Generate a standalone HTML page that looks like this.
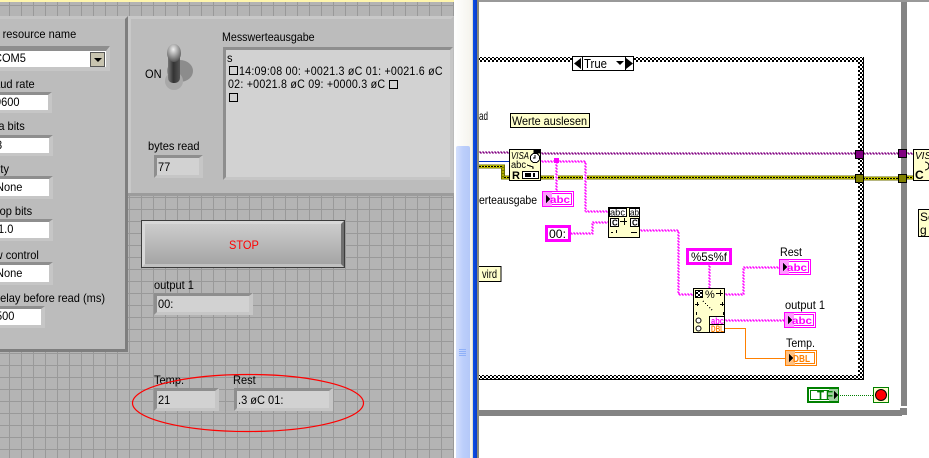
<!DOCTYPE html>
<html><head><meta charset="utf-8"><style>
html,body{margin:0;padding:0;width:929px;height:458px;overflow:hidden;background:#fff}
body{position:relative;font-family:"Liberation Sans",sans-serif;font-size:12px;color:#000}
.a{position:absolute}
.t{position:absolute;white-space:nowrap;line-height:14px;transform:scaleX(.92);transform-origin:0 0}
#fp{position:absolute;left:0;top:0;width:454px;height:458px;overflow:hidden;background-color:#b4b4b4;
background-image:linear-gradient(90deg,#999 1px,transparent 1px),linear-gradient(#999 1px,transparent 1px);
background-size:12px 12px;background-position:9px 5px}
.f{position:absolute;box-sizing:border-box;border-style:solid;border-width:3px 4px 3px 3px;border-color:#8e8e8e #c6c6c6 #c6c6c6 #8e8e8e;white-space:nowrap;line-height:14px;overflow:hidden;padding-left:1px}
.f span{display:inline-block;transform:scaleX(.92);transform-origin:0 0}
.w{background:#fff}.g{background:#d2d2d2}
.sq{position:absolute;width:7px;height:7px;border:1px solid #000}
</style></head><body>
<div id="fp">
<div class="a" style="left:0;top:0;width:454px;height:2px;background:#fff6ac"></div>
<!-- left panel -->
<div class="a" style="left:-4px;top:16px;width:132px;height:336px;box-sizing:border-box;background:#bcbcbc;border:3px solid;border-color:#c4c4c4 #7e7e7e #7e7e7e #c4c4c4"></div>
<div class="t" style="left:-25px;top:27px">VISA resource name</div>
<div class="f w" style="left:-4px;top:46px;width:114px;height:25px;border-width:5px 4px 4px 3px"><span style="margin-left:-6px">COM5</span></div>
<div class="a" style="left:90px;top:52px;width:15px;height:15px;background:#c8c4b0;border:1px solid #555;box-sizing:border-box"></div>
<div class="a" style="left:94px;top:58px;width:0;height:0;border:4px solid transparent;border-top:4px solid #000;border-bottom:0"></div>
<div class="t" style="left:-12px;top:77px">baud rate</div>
<div class="f w" style="left:-4px;top:92px;width:56px;height:21px"><span style="margin-left:-5px">9600</span></div>
<div class="t" style="left:-17px;top:119px">data bits</div>
<div class="f w" style="left:-4px;top:135px;width:57px;height:21px"><span style="margin-left:-4px">8</span></div>
<div class="t" style="left:-18px;top:162px">parity</div>
<div class="f w" style="left:-4px;top:176px;width:57px;height:23px;padding-top:1px"><span style="margin-left:-4px">None</span></div>
<div class="t" style="left:-9px;top:204px">stop bits</div>
<div class="f w" style="left:-4px;top:219px;width:57px;height:22px"><span style="margin-left:-2px">1.0</span></div>
<div class="t" style="left:-17px;top:248px">flow control</div>
<div class="f w" style="left:-4px;top:262px;width:57px;height:23px;padding-top:1px"><span style="margin-left:-4px">None</span></div>
<div class="t" style="left:-6px;top:291px">delay before read (ms)</div>
<div class="f w" style="left:-4px;top:306px;width:49px;height:22px"><span style="margin-left:-4px">500</span></div>
<!-- right panel -->
<div class="a" style="left:128px;top:16px;width:326px;height:180px;box-sizing:border-box;background:#bcbcbc;border:3px solid;border-color:#c8c8c8 #bcbcbc #808080 #c8c8c8"></div>
<div class="a" style="left:128px;top:193px;width:326px;height:3px;background:#9c9c9c"></div>
<div class="t" style="left:145px;top:67px">ON</div>
<svg class="a" style="left:160px;top:40px" width="40" height="54">
<defs><linearGradient id="tg" x1="0" x2="1" y1="0" y2="0"><stop offset="0" stop-color="#777"/><stop offset=".45" stop-color="#333"/><stop offset="1" stop-color="#555"/></linearGradient>
<radialGradient id="tk" cx=".45" cy=".3" r=".7"><stop offset="0" stop-color="#eee"/><stop offset="1" stop-color="#555"/></radialGradient></defs>
<ellipse cx="20" cy="31" rx="13" ry="11" fill="#8c8c8c"/>
<ellipse cx="14" cy="41" rx="9" ry="9" fill="#a8a8a8"/>
<rect x="8" y="8" width="12" height="35" rx="5" fill="url(#tg)"/>
<ellipse cx="14" cy="13" rx="7" ry="9" fill="url(#tk)"/>
</svg>
<div class="t" style="left:222px;top:30px;transform:scaleX(.89)">Messwerteausgabe</div>
<div class="t" style="left:148px;top:139px">bytes read</div>
<div class="f g" style="left:154px;top:155px;width:49px;height:23px;padding-top:2px;padding-left:1px"><span>77</span></div>
<div class="a" style="left:223px;top:47px;width:230px;height:133px;box-sizing:border-box;background:#d2d2d2;border:3px solid;border-color:#8e8e8e #c6c6c6 #c6c6c6 #8e8e8e"></div>
<div class="t" style="left:227px;top:51px">s</div>
<div class="sq" style="left:229px;top:66px"></div>
<div class="t" style="left:239px;top:64px;letter-spacing:.25px;transform:scaleX(.89)">14:09:08 00: +0021.3 øC 01: +0021.6 øC</div>
<div class="t" style="left:228px;top:77px;letter-spacing:.25px;transform:scaleX(.89)">02: +0021.8 øC 09: +0000.3 øC</div>
<div class="sq" style="left:389px;top:80px"></div>
<div class="sq" style="left:229px;top:93px"></div>
<!-- STOP -->
<div class="a" style="left:141px;top:220px;width:204px;height:48px;box-sizing:border-box;border:1px solid #3c3c3c;background:linear-gradient(#cfcfcf,#a2a2a2)"></div>
<div class="a" style="left:142px;top:221px;width:202px;height:46px;box-sizing:border-box;border:3px solid;border-color:#d8d8d8 #6e6e6e #c0c0c0 #d8d8d8"></div>
<div class="t" style="left:229px;top:238px;color:#f00">STOP</div>
<div class="t" style="left:154px;top:278px">output 1</div>
<div class="f g" style="left:154px;top:293px;width:99px;height:22px;padding-top:1px;padding-left:1px"><span>00:</span></div>
<div class="t" style="left:154px;top:373px">Temp.</div>
<div class="f g" style="left:154px;top:388px;width:65px;height:23px;padding-top:2px;padding-left:1px"><span>21</span></div>
<div class="t" style="left:233px;top:373px">Rest</div>
<div class="f g" style="left:234px;top:388px;width:99px;height:23px;padding-top:2px;padding-left:1px"><span>.3 øC 01:</span></div>
<svg class="a" style="left:0;top:0" width="454" height="458"><ellipse cx="248" cy="403" rx="115.5" ry="28.5" fill="none" stroke="#f00" stroke-width="1.2"/></svg>
</div>
<!-- scrollbar -->
<div class="a" style="left:454px;top:0;width:18px;height:458px;background:linear-gradient(90deg,#fff,#f4f3ec)"></div>
<div class="a" style="left:456px;top:146px;width:14px;height:312px;background:linear-gradient(90deg,#d4e0fd,#bccefb 50%,#b4c8f8);border-radius:2px 2px 0 0"></div>
<div class="a" style="left:459px;top:349px;width:7px;height:8px;background:repeating-linear-gradient(#8fb0f8 0 1px,transparent 1px 2px)"></div>
<div class="a" style="left:472px;top:0;width:1px;height:458px;background:#dcdcd0"></div>
<div class="a" style="left:473px;top:0;width:4px;height:458px;background:linear-gradient(90deg,#0a50e8,#0a3cc8)"></div>
<div class="a" style="left:477px;top:0;width:2px;height:458px;background:#8a8a78"></div>
<!-- diagram -->
<svg class="a" style="left:479px;top:0" width="450" height="458" viewBox="479 0 450 458" font-family="Liberation Sans, sans-serif" font-size="12" shape-rendering="crispEdges">
<defs>
<pattern id="chk" width="4" height="4" patternUnits="userSpaceOnUse"><rect width="4" height="4" fill="#fff"/><rect width="2" height="2" fill="#000"/><rect x="2" y="2" width="2" height="2" fill="#000"/></pattern>
</defs>
<rect x="479" y="0" width="450" height="2" fill="#999"/>
<!-- while loop -->
<rect x="901" y="2" width="6" height="404" fill="#848484"/>
<rect x="479" y="410" width="423" height="6" fill="#848484"/>
<rect x="900" y="408" width="7" height="7" fill="#848484"/>
<!-- case -->
<rect x="479" y="57" width="385" height="5" fill="url(#chk)"/>
<rect x="479" y="375" width="385" height="5" fill="url(#chk)"/>
<rect x="858" y="57" width="5" height="323" fill="url(#chk)"/>
<rect x="863" y="57" width="1" height="323" fill="#000"/>
<rect x="479" y="379" width="385" height="1" fill="#000"/>
<rect x="572.500" y="56.500" width="61" height="14" fill="#fff" stroke="#000"/>
<path d="M582.500 56V71M625.500 56V71" stroke="#000" fill="none"/>
<path d="M574 63.500L581 58V69ZM633 63.500L626 58V69Z" fill="#000" shape-rendering="auto"/>
<path d="M616 61H624L620 65Z" fill="#000" shape-rendering="auto"/>
<text x="584" y="68" font-size="12.5" textLength="23" lengthAdjust="spacingAndGlyphs">True</text>
<!-- labels -->
<text x="479" y="120" textLength="9" lengthAdjust="spacingAndGlyphs">ad</text>
<rect x="510.500" y="113.500" width="79" height="14" fill="#ffc" stroke="#000"/>
<text x="512" y="125" textLength="75" lengthAdjust="spacingAndGlyphs">Werte auslesen</text>
<text x="479" y="204" textLength="58" lengthAdjust="spacingAndGlyphs">erteausgabe</text>
<rect x="479" y="266" width="22" height="16" fill="#ffc"/>
<path d="M479 266.500H501V281.500H479" fill="none" stroke="#000"/>
<text x="482" y="278" textLength="15" lengthAdjust="spacingAndGlyphs">vird</text>
<!-- wires purple -->
<g fill="none" stroke="#800080">
<path d="M479 152H509M541 153H855M863 153H898M907 153H913" stroke-dasharray="2 1"/>
<path d="M479 153H509M541 154H855M863 154H898M907 154H913" stroke-dasharray="2 1" stroke-dashoffset="2"/>
</g>
<path d="M479 161.500H509" stroke="#0030c0" fill="none"/>
<!-- yellow -->
<g fill="none">
<path d="M479 166.500H503V177.500H509M541 177.500H554M558 177.500H583M587 177.500H855M863 178.500H898M907 177.500H913" stroke="#6c6c00" stroke-width="4"/>
<path d="M479 166.500H503V177.500H509M541 177.500H554M558 177.500H583M587 177.500H855M863 178.500H898M907 177.500H913" stroke="#e8e800" stroke-width="2"/>
<path d="M479 166.500H503V177.500H509M541 177.500H554M558 177.500H583M587 177.500H855M863 178.500H898M907 177.500H913" stroke="#000" stroke-width="1" stroke-dasharray="2 1"/>
</g>
<!-- pink wires -->
<g fill="none" stroke="#f0f">
<path d="M541 161H585V211H608M556 161V191M570 233H592V222H608M640 230H678V294H693M709 265V288M725 294H743V267H779M725 320H784" stroke-dasharray="2 1"/>
<path transform="translate(1 1)" d="M540 161H585V211H607M556 160V190M569 233H592V222H607M639 230H678V294H692M709 264V287M724 294H743V267H778M724 320H783" stroke-dasharray="2 1" stroke-dashoffset="2"/>
</g>
<rect x="554" y="158" width="5" height="5" fill="#f0f"/>
<!-- orange -->
<path d="M725 328.500H745.500V358.500H785" fill="none" stroke="#ff8000"/>
<!-- terminals -->
<g stroke="#000">
<rect x="855.500" y="150.500" width="8" height="8" fill="#800080"/>
<rect x="855.500" y="174.500" width="8" height="8" fill="#808000"/>
<rect x="898.500" y="149.500" width="8" height="8" fill="#800080"/>
<rect x="898.500" y="174.500" width="8" height="8" fill="#808000"/>
</g>
<!-- VISA node -->
<rect x="509.500" y="149.500" width="31" height="31" fill="#ffc" stroke="#000"/>
<text x="511" y="159" font-size="10" font-style="italic" textLength="18" lengthAdjust="spacingAndGlyphs">VISA</text>
<rect x="533.500" y="149.500" width="7" height="4" fill="#000"/>
<rect x="530.500" y="153.500" width="9" height="9" rx="4" fill="#fff" stroke="#000"/>
<path d="M535 155V158H533M527 165L533 167V169" stroke="#000" fill="none"/>
<text x="511" y="168" font-size="10" textLength="15" lengthAdjust="spacingAndGlyphs">abc</text>
<text x="512" y="179" font-size="11" font-weight="bold">R</text>
<rect x="522.500" y="171.500" width="16" height="7" fill="#fff" stroke="#000"/>
<rect x="525" y="173" width="6" height="4" fill="#000"/><rect x="533" y="173" width="2" height="4" fill="#000"/>
<!-- Replace node -->
<rect x="608.500" y="207.500" width="31" height="30" fill="#ffc" stroke="#000"/>
<rect x="609.500" y="208.500" width="17" height="8" fill="#fff" stroke="#000"/>
<rect x="629.500" y="208.500" width="10" height="8" fill="#fff" stroke="#000"/>
<text x="610" y="215.500" font-size="9.500" textLength="15" lengthAdjust="spacingAndGlyphs">abc</text><text x="630" y="215.500" font-size="9.500" textLength="9" lengthAdjust="spacingAndGlyphs">ab</text>
<rect x="610.500" y="218.500" width="8" height="8" fill="#fff" stroke="#000"/>
<rect x="630.500" y="218.500" width="8" height="8" fill="#fff" stroke="#000"/>
<text x="612" y="225.500" font-size="8" font-weight="bold">C</text><text x="632" y="225.500" font-size="8" font-weight="bold">C</text>
<path d="M620 221.500H627M624.500 218V225" stroke="#000" fill="none"/>
<path d="M611 232.500H613M616.500 230V233M631 232.500H637" stroke="#000" fill="none"/>
<!-- Scan node -->
<rect x="693.500" y="288.500" width="31" height="44" fill="#ffc" stroke="#000"/>
<rect x="695.500" y="290.500" width="7" height="7" fill="url(#chk)" stroke="#000"/>
<text x="705" y="298" font-size="11">%</text>
<path d="M716 293.500H723M720.500 290V296M695 304.500H699M697.500 302V306M720 304.500H724M722.500 302V306M696.500 312V315M723.500 312V315" stroke="#000" fill="none"/>
<path d="M703 301L713 311" stroke="#000" fill="none" stroke-dasharray="1 2"/>
<circle cx="698.500" cy="320.500" r="2.500" fill="#fff" stroke="#000" shape-rendering="auto"/>
<circle cx="698.500" cy="328.500" r="2.500" fill="#fff" stroke="#000" shape-rendering="auto"/>
<rect x="709.500" y="316.500" width="15" height="8" fill="#fff" stroke="#000"/>
<rect x="709.500" y="324.500" width="15" height="8" fill="#fff" stroke="#000"/>
<text x="711" y="324" font-size="9" font-weight="bold" fill="#f0f" textLength="13" lengthAdjust="spacingAndGlyphs">abc</text>
<text x="711" y="332" font-size="9" font-weight="bold" fill="#ff8000" textLength="13" lengthAdjust="spacingAndGlyphs">DBL</text>
<!-- string indicators -->
<g fill="none">
<rect x="542.500" y="191.500" width="31" height="15" fill="#fff" stroke="#f0f"/>
<rect x="544.500" y="193.500" width="27" height="11" stroke="#f0f"/>
<rect x="779.500" y="259.500" width="31" height="15" fill="#fff" stroke="#f0f"/>
<rect x="781.500" y="261.500" width="27" height="11" stroke="#f0f"/>
<rect x="784.500" y="312.500" width="31" height="15" fill="#fff" stroke="#f0f"/>
<rect x="786.500" y="314.500" width="27" height="11" stroke="#f0f"/>
<rect x="785.500" y="350.500" width="31" height="15" fill="#fff" stroke="#ff8000"/>
<rect x="787.500" y="352.500" width="27" height="11" stroke="#ff8000"/>
</g>
<g fill="#f0f" font-size="10.500" font-weight="bold">
<rect x="543" y="192" width="9" height="14" fill="#ff99ff"/><rect x="780" y="260" width="9" height="14" fill="#ff99ff"/><rect x="785" y="313" width="9" height="14" fill="#ff99ff"/>
<text x="550" y="203" textLength="20" lengthAdjust="spacingAndGlyphs">abc</text><text x="787" y="271" textLength="20" lengthAdjust="spacingAndGlyphs">abc</text><text x="792" y="324" textLength="20" lengthAdjust="spacingAndGlyphs">abc</text>
</g>
<rect x="786" y="351" width="9" height="14" fill="#ffc080"/>
<text x="793" y="362" font-size="10.500" font-weight="bold" fill="#ff8000" textLength="17" lengthAdjust="spacingAndGlyphs">DBL</text>
<path d="M546 195V203L550 199ZM783 263V271L787 267ZM788 316V324L792 320ZM789 354V362L793 358Z" fill="#000"/>
<!-- constants -->
<rect x="546.500" y="226.500" width="23" height="14" fill="#fff" stroke="#f0f" stroke-width="3"/>
<text x="549" y="238" textLength="17" lengthAdjust="spacingAndGlyphs">00:</text>
<rect x="687.500" y="249.500" width="43" height="14" fill="#fff" stroke="#f0f" stroke-width="3"/>
<text x="691" y="261" textLength="36" lengthAdjust="spacingAndGlyphs">%5s%f</text>
<text x="780" y="256" textLength="22" lengthAdjust="spacingAndGlyphs">Rest</text>
<text x="785" y="309" textLength="40" lengthAdjust="spacingAndGlyphs">output 1</text>
<text x="786" y="347" textLength="29" lengthAdjust="spacingAndGlyphs">Temp.</text>
<!-- TF -->
<rect x="808" y="388" width="30" height="14" fill="#fff" stroke="#008000" stroke-width="2"/>
<rect x="810.500" y="390.500" width="25" height="9" fill="#fff" stroke="#008000"/>
<rect x="829" y="389" width="9" height="12" fill="#9fcf9f"/>
<text x="817" y="399.500" font-size="11.500" font-weight="bold" fill="#008000" textLength="16" lengthAdjust="spacing">TF</text>
<path d="M834 391V399L838 395Z" fill="#000"/>
<path d="M840 395.500H873" stroke="#008000" stroke-dasharray="1 1" fill="none"/>
<rect x="873.500" y="387.500" width="15" height="15" fill="#ffc" stroke="#008000"/>
<circle cx="881" cy="395" r="5.500" fill="#f00" stroke="#000" shape-rendering="auto"/>
<!-- right cut node -->
<rect x="913.500" y="149.500" width="20" height="31" fill="#ffc" stroke="#000"/>
<text x="915" y="159" font-size="10" font-style="italic">VISA</text>
<path d="M925 162A4 4 0 1 1 925 170" stroke="#000" fill="none" shape-rendering="auto"/>
<text x="915" y="179" font-size="12" font-weight="bold">C</text>
<rect x="918.500" y="209.500" width="15" height="27" fill="#ffc" stroke="#000"/>
<text x="920" y="221">So</text><text x="920" y="234">g</text>
</svg>
</body></html>
